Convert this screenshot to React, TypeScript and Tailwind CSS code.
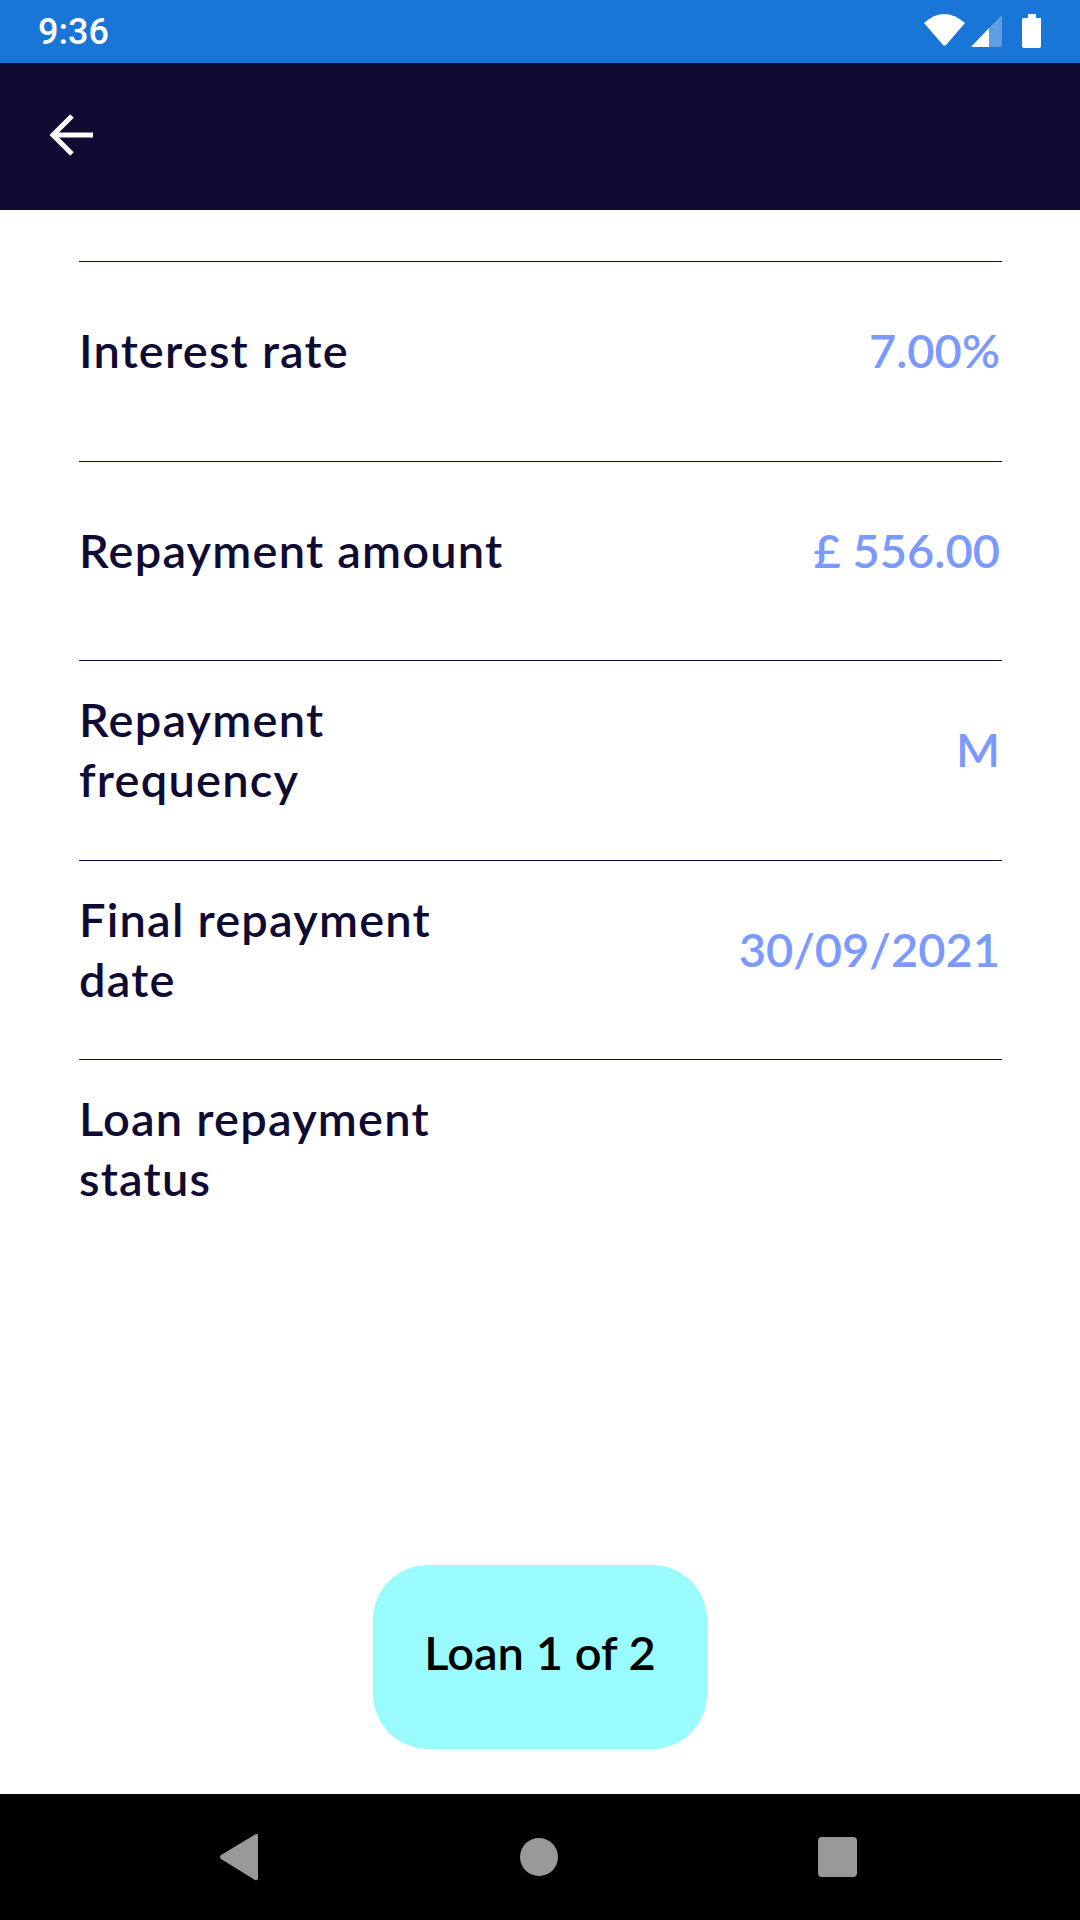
const rows = [
  { label: "Interest rate", value: "7.00%" },
  { label: "Repayment amount", value: "£ 556.00" },
  { label: "Repayment frequency", value: "M" },
  { label: "Final repayment date", value: "30/09/2021" },
  { label: "Loan repayment status", value: "" },
];

function StatusIcons() {
  return (
    <svg width="130" height="63" viewBox="0 0 130 63" className="block">
      {/* wifi */}
      <path d="M13 23 Q33 5 54 23 L35 45 Q33.500 46.500 32 45 Z" fill="#fff" />
      {/* signal */}
      <path d="M60 47 L78 28 V47 Z" fill="#fff" />
      <path d="M78 28 L90 16 Q91 15.500 91 17 V45 Q91 47 89 47 H78 Z" fill="#fff" fillOpacity="0.3" />
      {/* battery */}
      <path d="M117 14 H125 V18 H130 V46 Q130 48 128 48 H113 Q111 48 111 46 V20 Q111 18 113 18 H117 Z" fill="#fff" />
    </svg>
  );
}

export default function App() {
  return (
    <div className="w-[1080px] h-[1920px] flex flex-col bg-white font-['Lato',sans-serif] overflow-hidden">
      <div className="h-[63px] shrink-0 bg-[#1976d6] flex items-center justify-between pl-[38px] pr-[39px]">
        <span className="font-['Roboto',sans-serif] font-medium text-[36px] leading-none text-white">9:36</span>
        <StatusIcons />
      </div>

      <div className="h-[147px] shrink-0 bg-[#100b33] flex items-center pl-[49px] pb-[4px]">
        <button className="block">
          <svg width="44" height="42" viewBox="0 0 44 42" fill="none" stroke="#fff" strokeWidth="5" className="block">
            <path d="M44 21 H5" />
            <path d="M23 2 L4 21 L23 40" />
          </svg>
        </button>
      </div>

      <div className="flex-1 flex flex-col pl-[79px] pr-[78px] pt-[51px]">
        {rows.map((row) => (
          <div
            key={row.label}
            className="h-[199.5px] shrink-0 border-t border-[#100b33] flex items-center justify-between pb-[22px]"
          >
            <span className="w-[440px] text-[47px] leading-[60px] tracking-[1.2px] font-semibold text-[#100b33]">
              {row.label}
            </span>
            <span className="pr-[2px] text-[47px] leading-[60px] font-semibold text-[#7b99ff]">{row.value}</span>
          </div>
        ))}

        <button className="mt-auto mb-[45px] mr-[1px] self-center w-[334px] h-[184px] shrink-0 rounded-[55px] bg-[#9afbfc] pb-[10px] text-[47px] leading-[60px] font-semibold text-black">
          Loan 1 of 2
        </button>
      </div>

      <div className="h-[126px] shrink-0 bg-black flex items-center justify-between pl-[219px] pr-[223px]">
        <svg width="40" height="48" viewBox="0 0 40 48" className="block">
          <path d="M37 1 Q39 0 39 3 V45 Q39 48 36 47 L2 26 Q0 24 2 22 Z" fill="#999" />
        </svg>
        <div className="w-[38px] h-[38px] rounded-full bg-[#999]" />
        <div className="w-[39px] h-[40px] rounded-[4px] bg-[#999]" />
      </div>
    </div>
  );
}
